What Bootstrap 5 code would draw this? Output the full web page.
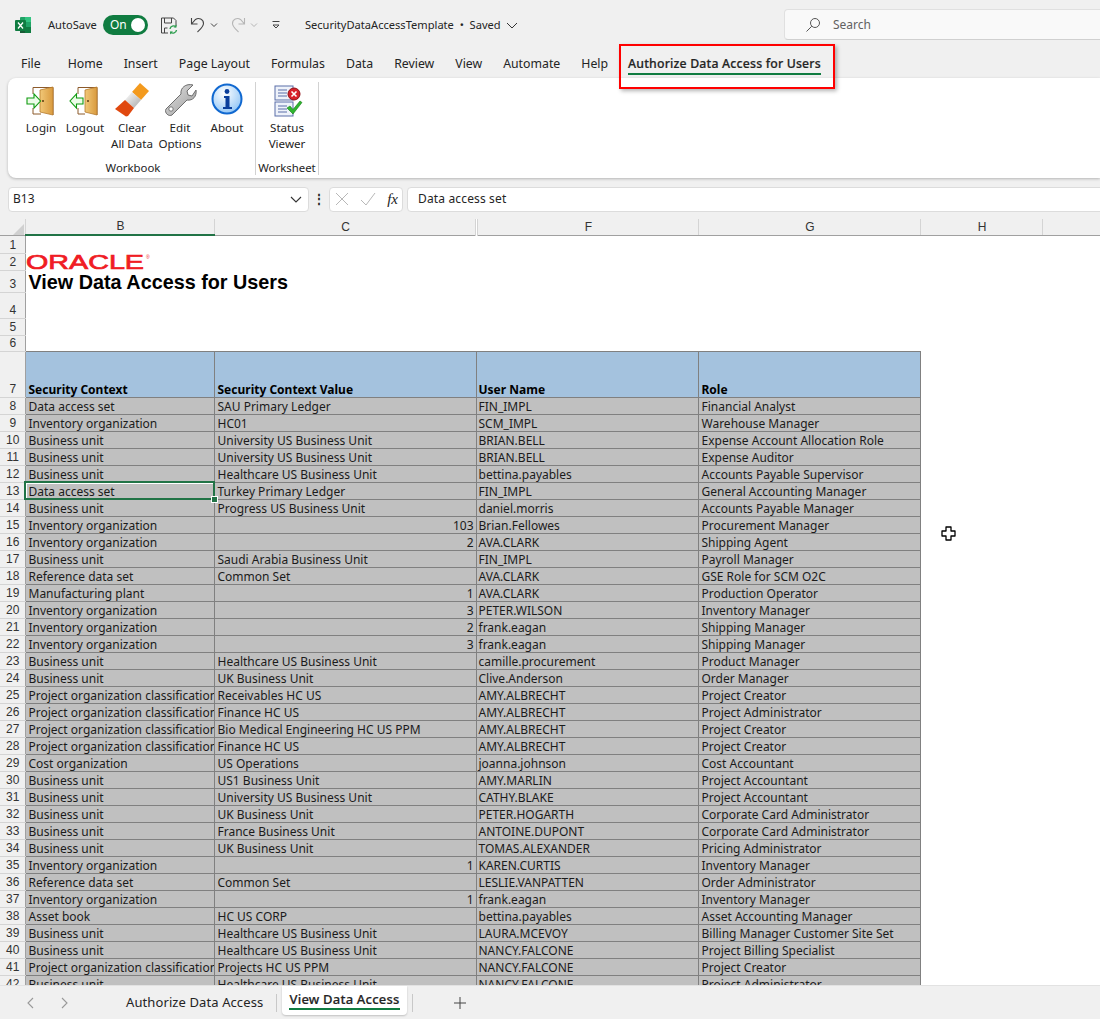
<!DOCTYPE html>
<html lang="en">
<head>
<meta charset="utf-8">
<title>SecurityDataAccessTemplate</title>
<link href="https://cdn.jsdelivr.net/npm/bootstrap@5.3.0/dist/css/bootstrap.min.css" rel="stylesheet">
<style>
html,body{margin:0;height:1019px;overflow:hidden;background:#f0f0f0}
body{font-family:"Noto Sans","Open Sans",sans-serif;font-size:12px;color:#242424;width:1100px;position:relative}
.titlebar{height:44px;padding-left:15px;padding-top:6px}
.autosave{margin-left:17px;font-size:11.1px}
.toggle{width:45px;height:20px;border-radius:10px;background:#107c41;color:#fff;margin-left:6px;padding:0 3px 0 7px;font-size:12px}
.knob{width:14px;height:14px;border-radius:50%;background:#fff}
.searchbox{width:330px;height:31px;background:#f9f9f9;border:1px solid #e0e0e0;border-bottom-color:#d0d0d0;border-radius:4px;margin-left:auto;margin-right:-14px;margin-top:-1px;padding-left:20px;color:#616161;gap:12px}
.docname{margin-left:24px;font-size:11.1px}
.tabs{height:34px;padding:6px 0 0 21px;gap:21px;font-size:12.3px}
.tabs .active-tab{font-weight:500;border-bottom:2px solid #107c41;line-height:16px;margin-left:-1px;padding-bottom:1px;margin-top:2px;letter-spacing:.18px;-webkit-text-stroke:.2px #242424}
.ribbon{height:100px;margin-left:8px;background:#fff;border-radius:8px 0 0 8px;box-shadow:0 1px 3px rgba(0,0,0,.25);padding:4px 0 0 11px}
.rgroup{height:93px;border-right:1px solid #d2d2d2;width:237px}
.rgroup.two{width:63px}
.rbtn{text-align:center;line-height:16px;font-size:11.6px;flex:none}
.rbtn svg{display:block;margin:0 auto 2px;width:36px;height:36px}
.glabel{font-size:11.4px;line-height:14px;text-align:center;margin-top:auto}
.rgroup:first-child .glabel{padding-right:8px}
.formulabar{height:41px;padding:8px 0 7px 8px}
.fbox{height:25px;background:#fff;border:1px solid #dcdcdc;border-radius:4px}
.namebox{width:301px;padding:0 6px 0 4px}
.fxbox{width:74px;padding:0 4px 0 5px}
.fval{flex:1;margin-left:4px;padding-left:10px;margin-right:-4px;letter-spacing:.15px}
.dots{width:20px;text-align:center;font-weight:700;line-height:8px}
.sheet{height:767px;overflow:hidden;background:#fff;position:relative}
.xl{table-layout:fixed;width:1100px;border-collapse:collapse;margin:0;font-size:12px;color:#1b1b1b}
.xl td,.xl th{padding:0 2px 0 3px;height:17px;line-height:15px;white-space:nowrap;overflow:hidden;vertical-align:bottom;font-weight:400}
.xl .d td:nth-child(4),.xl .d-h td:nth-child(4){padding-left:2px}
.xl .ch{height:16px;background:#f0f0f0;text-align:center;font-family:"Liberation Sans",sans-serif;color:#333;font-size:12px;border-bottom:1px solid #a0a0a0;border-right:1px solid #d4d4d4;line-height:15px;padding:0 0 0 2px}
.xl .ch.sel{border-bottom:2px solid #217346;background:#f0f0f0}
.xl .ch.dbl{border-right:3px double #d4d4d4}
.xl .rh{background:#f0f0f0;text-align:center;padding:0 0 0 1px;border-right:1px solid #a0a0a0;border-bottom:1px solid #d4d4d4;font-family:"Liberation Sans",sans-serif;color:#333;font-size:12px}
.xl tr.short td,.xl tr.short th{height:16px}
.corner i{display:block;width:0;height:0;margin:2px 1px 0 auto;border-left:11px solid transparent;border-bottom:11px solid #d0d0d0}
.xl .d td,.xl .d-h td{border:1px solid #808080}
.xl .d td{background:#c0c0c0}
.xl .d-h td{background:#a4c2de;font-weight:700;color:#000}
.xl td.num{text-align:right}
.xl .d td.pick{position:relative;outline:2px solid #217346;outline-offset:-1px;box-shadow:inset 0 0 0 1px #fff}
.handle{position:absolute;left:211px;top:277px;width:5px;height:5px;background:#217346;border:1px solid #fff;box-sizing:content-box}
.xl td.title{font-family:"Liberation Sans",sans-serif;font-weight:700;font-size:19.8px;color:#000;vertical-align:middle;padding:2px 0 0 3px;line-height:20px}
.xl td.oracle{padding:0 0 0 2px;vertical-align:middle;line-height:0;overflow:visible}
.oracle svg{display:block;overflow:visible}
.sheettabs{height:33px;padding-left:26px;font-size:13px;background:#f0f0f0;position:relative;box-shadow:0 -1px 0 #e2e2e2}
.stab-a{margin-left:57px;letter-spacing:.1px;width:150px}
.sep{width:1px;height:18px;background:#c8c8c8}
.stab-b{width:125px;height:29px;background:#fff;margin-left:5px;margin-top:-4px;border-radius:0 0 4px 4px;box-shadow:0 1px 2px rgba(0,0,0,.2);text-align:center;font-weight:500;line-height:14px;padding:6px 7px 0;letter-spacing:.2px}
.stab-b span{display:block;border-bottom:2px solid #107c41;padding-bottom:2px;white-space:nowrap;-webkit-text-stroke:.2px #242424}
.highlight{position:absolute;left:619px;top:44px;width:216px;height:45px;border:2px solid #f00;box-shadow:2px 2px 4px rgba(0,0,0,.3);pointer-events:none}
.cursor{position:absolute;left:941px;top:526px}
</style>
</head>
<body>
<div class="titlebar d-flex align-items-center">
  <svg width="16" height="18" viewBox="0 0 16 18"><rect x="5" y="1" width="11" height="16" rx="1" fill="#21a366"/><rect x="10" y="1" width="6" height="5" fill="#33c481"/><rect x="10" y="6" width="6" height="5" fill="#21a366"/><rect x="10" y="11" width="6" height="6" fill="#107c41"/><rect x="5" y="11" width="5" height="6" fill="#185c37"/><rect x="0" y="4" width="11" height="11" rx="1" fill="#107c41"/><path d="M3 6.500l5 6M8 6.500l-5 6" stroke="#fff" stroke-width="1.300"/></svg>
  <span class="autosave">AutoSave</span>
  <div class="toggle d-flex align-items-center justify-content-between"><span>On</span><span class="knob"></span></div>
  <svg width="18" height="19" viewBox="0 0 18 19" style="margin-left:12px"><path d="M1.500 2h12l2.500 2.500V10M8 17H1.500V2M4.500 2v5h7V2M4.500 17v-5h3" fill="none" stroke="#444" stroke-width="1"/><path d="M10 13a3.500 3.500 0 0 1 6-2M16.500 14a3.500 3.500 0 0 1-6 2" fill="none" stroke="#2e9e4f" stroke-width="1.400"/><path d="M16.500 8.500v3h-3zM10 18.500v-3h3z" fill="#2e9e4f"/></svg>
  <svg width="16" height="18" viewBox="0 0 16 18" style="margin-left:12px"><path d="M1.500 2v6h6M1.500 8L5.500 3.500a5 5 0 0 1 8 4c0 3-2.500 5-6 8.500" fill="none" stroke="#444" stroke-width="1.100"/></svg>
  <svg width="8" height="6" viewBox="0 0 8 6" style="margin-left:4px"><path d="M1 1.500l3 3 3-3" fill="none" stroke="#444"/></svg>
  <svg width="16" height="18" viewBox="0 0 16 18" style="margin-left:12px"><path d="M14.500 2v6h-6M14.500 8L10.500 3.500a5 5 0 0 0-8 4c0 3 2.500 5 6 8.500" fill="none" stroke="#b5b5b5" stroke-width="1.100"/></svg>
  <svg width="8" height="6" viewBox="0 0 8 6" style="margin-left:4px"><path d="M1 1.500l3 3 3-3" fill="none" stroke="#b5b5b5"/></svg>
  <svg width="10" height="10" viewBox="0 0 10 10" style="margin-left:13px"><path d="M1.500 1.500h7M2 5l3 3 3-3z" fill="none" stroke="#444"/></svg>
  <span class="docname">SecurityDataAccessTemplate &nbsp;•&nbsp; Saved</span>
  <svg width="12" height="7" viewBox="0 0 12 7" style="margin-left:5px"><path d="M1 1l5 5 5-5" fill="none" stroke="#333"/></svg>
  <div class="searchbox d-flex align-items-center">
    <svg width="16" height="16" viewBox="0 0 16 16"><circle cx="10" cy="6" r="4.500" fill="none" stroke="#555"/><path d="M6.800 9.200L1.500 14.500" stroke="#555"/></svg>
    <span>Search</span>
  </div>
</div>
<nav class="tabs d-flex align-items-center">
  <span>File</span><span style="margin-left:6px">Home</span><span>Insert</span><span>Page Layout</span><span>Formulas</span><span>Data</span><span>Review</span><span>View</span><span>Automate</span><span>Help</span><span class="active-tab">Authorize Data Access for Users</span>
</nav>
<section class="ribbon d-flex">
  <div class="rgroup d-flex flex-column">
    <div class="d-flex">
      <div class="rbtn" style="width:44px"><svg viewBox="0 0 36 36"><defs><linearGradient id="door" x1="0" y1="0" x2="1" y2="0"><stop offset="0" stop-color="#f1c878"/><stop offset="1" stop-color="#d99a3e"/></linearGradient></defs><path d="M10 12V5.500h20V33M10 26v6h8" fill="none" stroke="#8c5a2b"/><path d="M17 8l13-3v28l-13-3z" fill="url(#door)" stroke="#b57a2c" stroke-width=".8"/><circle cx="20" cy="19" r="1" fill="#5b3a10"/><path d="M4 16h7v-4l6.500 7L11 26v-4H4z" fill="#ecfce8" stroke="#0f9a0f" stroke-width="1.100"/></svg>Login</div>
      <div class="rbtn" style="width:44px"><svg viewBox="0 0 36 36"><path d="M11 12V5.500h19V33M11 26v6h7" fill="none" stroke="#8c5a2b"/><path d="M18 8l12-3v28l-12-3z" fill="url(#door)" stroke="#b57a2c" stroke-width=".8"/><circle cx="21" cy="19" r="1" fill="#5b3a10"/><path d="M16 16H9.500v-4L3 19l6.500 7v-4H16z" fill="#ecfce8" stroke="#0f9a0f" stroke-width="1.100"/></svg>Logout</div>
      <div class="rbtn" style="width:50px"><svg viewBox="0 0 36 36"><defs><linearGradient id="mid" x1="0" y1="0" x2="1" y2="1"><stop offset="0" stop-color="#fff"/><stop offset="1" stop-color="#a8a8a8"/></linearGradient></defs><path d="M26 1l9 8-8 9-9-8z" fill="#f39a1e"/><path d="M18 10l9 8-7 8-9-8z" fill="url(#mid)"/><path d="M11 18l9 8-6 8-2 .5L1 27z" fill="#e0480f"/></svg>Clear<br>All Data</div>
      <div class="rbtn" style="width:46px"><svg viewBox="0 0 36 36"><defs><linearGradient id="wr" x1="0" y1="0" x2="1" y2="1"><stop offset="0" stop-color="#e4e4e4"/><stop offset="1" stop-color="#9a9a9a"/></linearGradient></defs><path d="M31 3l-6 6 1 4 4 1 4-6c1 6-3 11-9 10L10 33c-3 2-8-2-6-6L19 12C18 6 24 1 31 3z" fill="url(#wr)" stroke="#6e6e6e"/><circle cx="9" cy="27" r="2.200" fill="#fff" stroke="#777"/></svg>Edit<br>Options</div>
      <div class="rbtn" style="width:48px"><svg viewBox="0 0 36 36"><defs><radialGradient id="ig" cx=".4" cy=".3" r=".8"><stop offset="0" stop-color="#fff"/><stop offset="1" stop-color="#86c0f5"/></radialGradient></defs><circle cx="18" cy="17" r="14.500" fill="url(#ig)" stroke="#1068d0" stroke-width="2"/><circle cx="18" cy="9.500" r="2.400" fill="#0b3f9c"/><path d="M15 14h5.500v11H23v2h-9v-2h2.500v-9H15z" fill="#0b3f9c"/></svg>About</div>
    </div>
    <div class="glabel">Workbook</div>
  </div>
  <div class="rgroup two d-flex flex-column">
    <div class="rbtn"><svg viewBox="0 0 36 36"><rect x="6" y="4" width="18" height="14" fill="#eef2fa" stroke="#5a6ea8"/><path d="M9 8h9M9 11h9M9 14h9" stroke="#5a6ea8"/><rect x="6" y="20" width="18" height="14" fill="#eef2fa" stroke="#5a6ea8"/><path d="M9 24h9M9 27h9M9 30h9" stroke="#5a6ea8"/><circle cx="25" cy="12" r="6" fill="#d8202a" stroke="#8f1016"/><path d="M22.500 9.500l5 5M27.500 9.500l-5 5" stroke="#fff" stroke-width="1.600"/><path d="M18 26l3-2 3 3.500L31 19l2 1.500L24 32z" fill="#2fb52f" stroke="#167a16" stroke-width=".6"/></svg>Status<br>Viewer</div>
    <div class="glabel">Worksheet</div>
  </div>
</section>
<div class="formulabar d-flex align-items-center">
  <div class="fbox namebox d-flex align-items-center justify-content-between"><span>B13</span><svg width="12" height="7" viewBox="0 0 12 7"><path d="M1 1l5 5 5-5" fill="none" stroke="#333" stroke-width="1.100"/></svg></div>
  <div class="dots">⋮</div>
  <div class="fbox fxbox d-flex align-items-center justify-content-between">
    <svg width="14" height="14" viewBox="0 0 14 14"><path d="M1 1l12 12M13 1L1 13" stroke="#b8b8b8"/></svg>
    <svg width="16" height="14" viewBox="0 0 16 14"><path d="M1 8l5 5 9-12" fill="none" stroke="#b8b8b8"/></svg>
    <span style="font-family:'Liberation Serif',serif;font-style:italic;font-size:15px;line-height:14px;color:#222">fx</span>
  </div>
  <div class="fbox fval d-flex align-items-center">Data access set</div>
</div>
<main class="sheet">
<table class="xl">
<colgroup><col style="width:25px"><col style="width:189px"><col style="width:262px"><col style="width:222px"><col style="width:222px"><col style="width:122px"><col style="width:58px"></colgroup>
<tr><th class="ch corner"><i></i></th><th class="ch sel">B</th><th class="ch dbl">C</th><th class="ch">F</th><th class="ch">G</th><th class="ch">H</th><th class="ch"></th></tr>
<tr><th class="rh" style="height:18px">1</th><td colspan="6"></td></tr>
<tr><th class="rh">2</th><td colspan="6" class="oracle"><svg width="125" height="16" viewBox="0 0 125 16"><text x="-2" y="15" textLength="118" lengthAdjust="spacingAndGlyphs" font-family="Liberation Sans" font-size="20" stroke="#f01c24" stroke-width=".7" fill="#f01c24">ORACLE</text><text x="118" y="5" font-size="5" font-family="Liberation Sans" fill="#f01c24">®</text></svg></td></tr>
<tr><th class="rh" style="height:22px">3</th><td colspan="6" class="title">View Data Access for Users</td></tr>
<tr><th class="rh" style="height:26px">4</th><td colspan="6"></td></tr>
<tr><th class="rh">5</th><td colspan="6"></td></tr>
<tr class="short"><th class="rh">6</th><td colspan="6"></td></tr>
<tr class="d-h"><th class="rh" style="height:46px">7</th><td>Security Context</td><td>Security Context Value</td><td>User Name</td><td>Role</td></tr>
<tr class="d"><th class="rh">8</th><td>Data access set</td><td>SAU Primary Ledger</td><td>FIN_IMPL</td><td>Financial Analyst</td></tr>
<tr class="d"><th class="rh">9</th><td>Inventory organization</td><td>HC01</td><td>SCM_IMPL</td><td>Warehouse Manager</td></tr>
<tr class="d"><th class="rh">10</th><td>Business unit</td><td>University US Business Unit</td><td>BRIAN.BELL</td><td>Expense Account Allocation Role</td></tr>
<tr class="d"><th class="rh">11</th><td>Business unit</td><td>University US Business Unit</td><td>BRIAN.BELL</td><td>Expense Auditor</td></tr>
<tr class="d"><th class="rh">12</th><td>Business unit</td><td>Healthcare US Business Unit</td><td>bettina.payables</td><td>Accounts Payable Supervisor</td></tr>
<tr class="d"><th class="rh">13</th><td class="pick">Data access set</td><td>Turkey Primary Ledger</td><td>FIN_IMPL</td><td>General Accounting Manager</td></tr>
<tr class="d"><th class="rh">14</th><td>Business unit</td><td>Progress US Business Unit</td><td>daniel.morris</td><td>Accounts Payable Manager</td></tr>
<tr class="d"><th class="rh">15</th><td>Inventory organization</td><td class="num">103</td><td>Brian.Fellowes</td><td>Procurement Manager</td></tr>
<tr class="d"><th class="rh">16</th><td>Inventory organization</td><td class="num">2</td><td>AVA.CLARK</td><td>Shipping Agent</td></tr>
<tr class="d"><th class="rh">17</th><td>Business unit</td><td>Saudi Arabia Business Unit</td><td>FIN_IMPL</td><td>Payroll Manager</td></tr>
<tr class="d"><th class="rh">18</th><td>Reference data set</td><td>Common Set</td><td>AVA.CLARK</td><td>GSE Role for SCM O2C</td></tr>
<tr class="d"><th class="rh">19</th><td>Manufacturing plant</td><td class="num">1</td><td>AVA.CLARK</td><td>Production Operator</td></tr>
<tr class="d"><th class="rh">20</th><td>Inventory organization</td><td class="num">3</td><td>PETER.WILSON</td><td>Inventory Manager</td></tr>
<tr class="d"><th class="rh">21</th><td>Inventory organization</td><td class="num">2</td><td>frank.eagan</td><td>Shipping Manager</td></tr>
<tr class="d"><th class="rh">22</th><td>Inventory organization</td><td class="num">3</td><td>frank.eagan</td><td>Shipping Manager</td></tr>
<tr class="d"><th class="rh">23</th><td>Business unit</td><td>Healthcare US Business Unit</td><td>camille.procurement</td><td>Product Manager</td></tr>
<tr class="d"><th class="rh">24</th><td>Business unit</td><td>UK Business Unit</td><td>Clive.Anderson</td><td>Order Manager</td></tr>
<tr class="d"><th class="rh">25</th><td>Project organization classification</td><td>Receivables HC US</td><td>AMY.ALBRECHT</td><td>Project Creator</td></tr>
<tr class="d"><th class="rh">26</th><td>Project organization classification</td><td>Finance HC US</td><td>AMY.ALBRECHT</td><td>Project Administrator</td></tr>
<tr class="d"><th class="rh">27</th><td>Project organization classification</td><td>Bio Medical Engineering HC US PPM</td><td>AMY.ALBRECHT</td><td>Project Creator</td></tr>
<tr class="d"><th class="rh">28</th><td>Project organization classification</td><td>Finance HC US</td><td>AMY.ALBRECHT</td><td>Project Creator</td></tr>
<tr class="d"><th class="rh">29</th><td>Cost organization</td><td>US Operations</td><td>joanna.johnson</td><td>Cost Accountant</td></tr>
<tr class="d"><th class="rh">30</th><td>Business unit</td><td>US1 Business Unit</td><td>AMY.MARLIN</td><td>Project Accountant</td></tr>
<tr class="d"><th class="rh">31</th><td>Business unit</td><td>University US Business Unit</td><td>CATHY.BLAKE</td><td>Project Accountant</td></tr>
<tr class="d"><th class="rh">32</th><td>Business unit</td><td>UK Business Unit</td><td>PETER.HOGARTH</td><td>Corporate Card Administrator</td></tr>
<tr class="d"><th class="rh">33</th><td>Business unit</td><td>France Business Unit</td><td>ANTOINE.DUPONT</td><td>Corporate Card Administrator</td></tr>
<tr class="d"><th class="rh">34</th><td>Business unit</td><td>UK Business Unit</td><td>TOMAS.ALEXANDER</td><td>Pricing Administrator</td></tr>
<tr class="d"><th class="rh">35</th><td>Inventory organization</td><td class="num">1</td><td>KAREN.CURTIS</td><td>Inventory Manager</td></tr>
<tr class="d"><th class="rh">36</th><td>Reference data set</td><td>Common Set</td><td>LESLIE.VANPATTEN</td><td>Order Administrator</td></tr>
<tr class="d"><th class="rh">37</th><td>Inventory organization</td><td class="num">1</td><td>frank.eagan</td><td>Inventory Manager</td></tr>
<tr class="d"><th class="rh">38</th><td>Asset book</td><td>HC US CORP</td><td>bettina.payables</td><td>Asset Accounting Manager</td></tr>
<tr class="d"><th class="rh">39</th><td>Business unit</td><td>Healthcare US Business Unit</td><td>LAURA.MCEVOY</td><td>Billing Manager Customer Site Set</td></tr>
<tr class="d"><th class="rh">40</th><td>Business unit</td><td>Healthcare US Business Unit</td><td>NANCY.FALCONE</td><td>Project Billing Specialist</td></tr>
<tr class="d"><th class="rh">41</th><td>Project organization classification</td><td>Projects HC US PPM</td><td>NANCY.FALCONE</td><td>Project Creator</td></tr>
<tr class="d"><th class="rh">42</th><td>Business unit</td><td>Healthcare US Business Unit</td><td>NANCY.FALCONE</td><td>Project Administrator</td></tr>
</table>
<span class="handle"></span>
</main>
<footer class="sheettabs d-flex align-items-center">
  <svg width="10" height="12" viewBox="0 0 10 12"><path d="M7 1L2 6l5 5" fill="none" stroke="#999" stroke-width="1.100"/></svg>
  <svg width="10" height="12" viewBox="0 0 10 12" style="margin-left:23px"><path d="M3 1l5 5-5 5" fill="none" stroke="#999" stroke-width="1.100"/></svg>
  <span class="stab-a">Authorize Data Access</span>
  <span class="sep"></span>
  <div class="stab-b"><span>View Data Access</span></div>
  <span class="sep" style="margin-left:5px"></span>
  <svg width="12" height="12" viewBox="0 0 12 12" style="margin-left:41px"><path d="M6 0v12M0 6h12" stroke="#444"/></svg>
</footer>
<div class="highlight"></div>
<svg class="cursor" width="15" height="15" viewBox="0 0 15 15"><path d="M5 1h5v4h4v5h-4v4H5v-4H1V5h4z" fill="#fff" stroke="#000" stroke-width="1.300" stroke-linejoin="round"/></svg>
<script src="https://cdn.jsdelivr.net/npm/bootstrap@5.3.0/dist/js/bootstrap.bundle.min.js"></script>
</body>
</html>
